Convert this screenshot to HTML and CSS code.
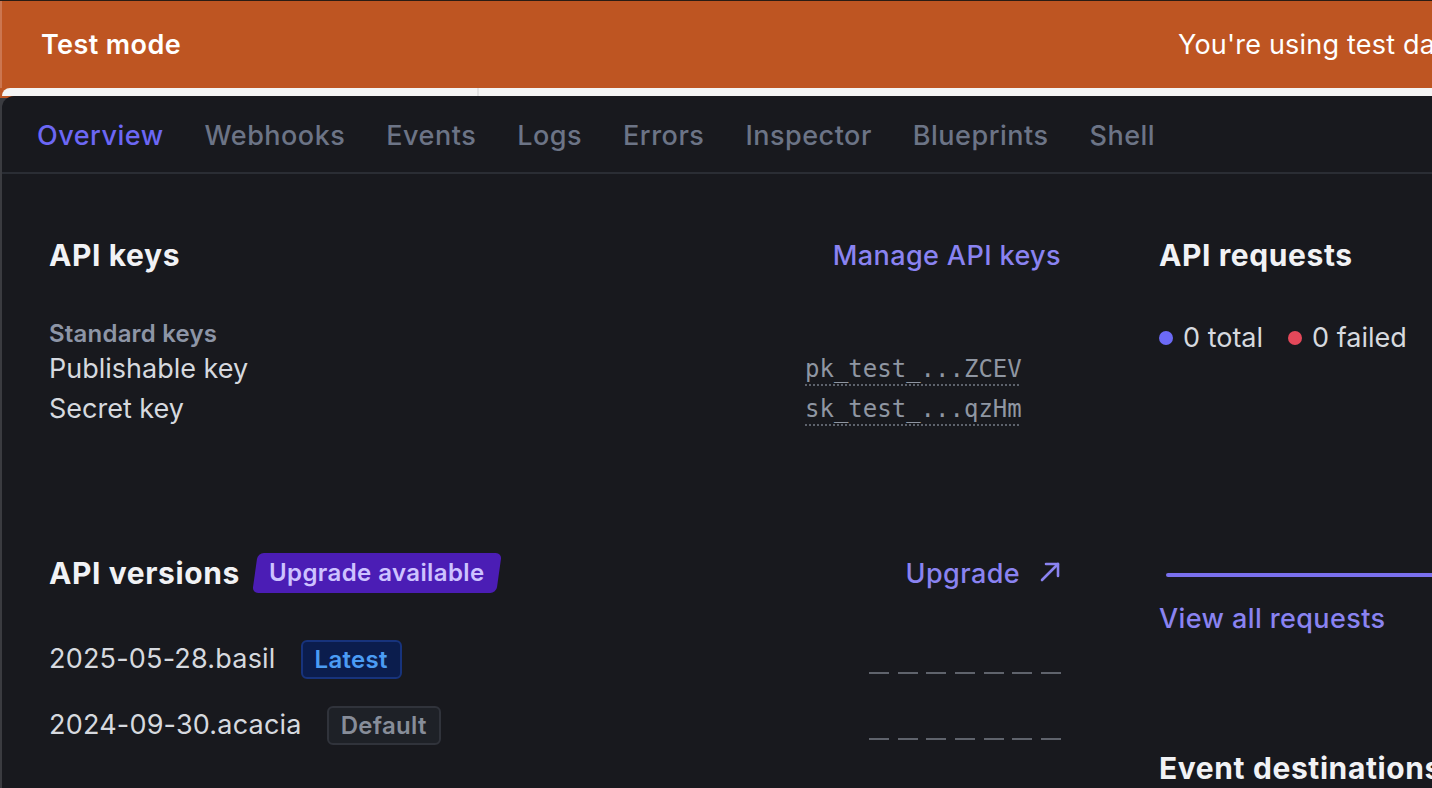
FILE: index.html
```html
<!DOCTYPE html>
<html lang="en">
<head>
<meta charset="utf-8">
<title>Workbench – Overview</title>
<link rel="stylesheet" href="styles.css">
</head>
<body>
  <header class="banner">
    <div class="banner-title">Test mode</div>
    <div class="banner-msg">You're using test data. To accept payments, complete your business profile.</div>
  </header>
  <div class="frame">
    <div class="underlay">
      <div class="underlay-side"></div>
      <div class="underlay-main"></div>
    </div>
    <main class="panel">
      <nav class="tabs">
        <a class="tab active">Overview</a>
        <a class="tab">Webhooks</a>
        <a class="tab">Events</a>
        <a class="tab">Logs</a>
        <a class="tab">Errors</a>
        <a class="tab">Inspector</a>
        <a class="tab">Blueprints</a>
        <a class="tab">Shell</a>
      </nav>
      <div class="content">
        <div class="col-left">
          <section class="keys">
            <div class="section-head">
              <h2 class="h2">API keys</h2>
              <a class="link">Manage API keys</a>
            </div>
            <div class="keys-group">
              <div class="group-label">Standard keys</div>
              <div class="key-row">
                <span class="key-label">Publishable key</span>
                <span class="key-value">pk_test_...ZCEV</span>
              </div>
              <div class="key-row">
                <span class="key-label">Secret key</span>
                <span class="key-value">sk_test_...qzHm</span>
              </div>
            </div>
          </section>
          <section class="versions">
            <div class="section-head tall">
              <div class="head-left">
                <h2 class="h2">API versions</h2>
                <span class="badge-upgrade"><span class="badge-upgrade-text">Upgrade available</span></span>
              </div>
              <a class="link link-icon">Upgrade
                <svg class="arrow" width="22" height="22" viewBox="0 0 22 22" fill="none" stroke="currentColor" stroke-width="2.6" stroke-linecap="round" stroke-linejoin="round"><path d="M3 19 L19 3"/><path d="M7 3 H19 V15"/></svg>
              </a>
            </div>
            <div class="version-row first">
              <div class="version-name">
                <span>2025-05-28.basil</span>
                <span class="pill pill-latest">Latest</span>
              </div>
              <div class="dashes"><i></i><i></i><i></i><i></i><i></i><i></i><i></i></div>
            </div>
            <div class="version-row">
              <div class="version-name">
                <span>2024-09-30.acacia</span>
                <span class="pill pill-default">Default</span>
              </div>
              <div class="dashes"><i></i><i></i><i></i><i></i><i></i><i></i><i></i></div>
            </div>
          </section>
        </div>
        <div class="col-right">
          <h2 class="h2">API requests</h2>
          <div class="legend">
            <span class="legend-item"><span class="dot dot-blue"></span>0 total</span>
            <span class="legend-item"><span class="dot dot-red"></span>0 failed</span>
          </div>
          <div class="chart-line"></div>
          <a class="link link-plain">View all requests</a>
          <h2 class="h2 h2-events">Event destinations</h2>
        </div>
      </div>
    </main>
  </div>
</body>
</html>
```

FILE: styles.css
```css
* { box-sizing: border-box; }

html, body {
  margin: 0;
  padding: 0;
  width: 1432px;
  height: 788px;
  overflow: hidden;
}

body {
  background: #18191e;
  font-family: Inter, "Noto Sans", sans-serif;
  color: #d6d9df;
}

.banner {
  height: 88px;
  border-top: 1px solid #2a1c14;
  background: #be5522;
  box-shadow: inset 2px 0 0 #cc7650;
  display: flex;
  align-items: center;
  padding-left: 41px;
  color: #fff;
  font-size: 27px;
  white-space: nowrap;
  overflow: hidden;
}

.banner-title {
  flex: none;
  width: 1137px;
  font-weight: 600;
  letter-spacing: 0.4px;
}

.banner-msg {
  flex: none;
  font-weight: 400;
  letter-spacing: 0.2px;
}

.frame {
  background: linear-gradient(to bottom, #be5522 0, #be5522 10px, #3a3b40 10px);
  padding-left: 2px;
  height: 700px;
}

.underlay {
  height: 8px;
  display: flex;
  background: #f4f4f4;
  border-top-left-radius: 16px;
}

.underlay-side {
  width: 477px;
  border-right: 2px solid #e3e3e3;
}

.underlay-main {
  flex: 1;
}

.panel {
  background: #18191e;
  border-top-left-radius: 12px;
  height: 692px;
}

.tabs {
  height: 78px;
  display: flex;
  align-items: center;
  gap: 41px;
  padding: 2px 0 0 35px;
  border-bottom: 2px solid #2a2d34;
}

.tab {
  font-size: 27px;
  font-weight: 500;
  letter-spacing: 0.5px;
  color: #6c7486;
}

.tab.active {
  color: #6c67f5;
}

.content {
  display: grid;
  grid-template-columns: 1012px 1fr;
  column-gap: 98px;
  padding: 63px 0 0 47px;
}

.h2 {
  margin: 0;
  font-size: 30px;
  line-height: 36px;
  font-weight: 700;
  letter-spacing: 0.6px;
  color: #f1f2f5;
  white-space: nowrap;
}

.section-head {
  display: flex;
  justify-content: space-between;
  align-items: center;
  height: 36px;
}

.section-head.tall {
  height: 40px;
}

.link {
  font-size: 27px;
  font-weight: 500;
  letter-spacing: 0.4px;
  color: #8a83f1;
  white-space: nowrap;
}

.link-icon {
  display: flex;
  align-items: center;
  gap: 19px;
}

.arrow {
  display: block;
  margin-top: -2px;
}

.keys-group {
  margin-top: 46px;
}

.group-label {
  font-size: 24px;
  line-height: 30px;
  font-weight: 600;
  letter-spacing: 0.2px;
  color: #8d95a6;
}

.key-row {
  display: grid;
  grid-template-columns: 1fr 256px;
  height: 40px;
  align-items: center;
}

.key-label {
  font-size: 27px;
  line-height: 40px;
  color: #d6d9df;
}

.key-value {
  justify-self: start;
  font-family: "DejaVu Sans Mono", "Liberation Mono", monospace;
  font-size: 24px;
  line-height: 28px;
  color: #8f96a2;
  text-decoration: underline dotted #5d626c;
  text-decoration-thickness: 2px;
  text-underline-offset: 7px;
}

.versions {
  margin-top: 124px;
}

.head-left {
  display: flex;
  align-items: center;
  gap: 15px;
}

.badge-upgrade {
  display: inline-block;
  background: #4b1db5;
  border-radius: 6px;
  transform: skewX(-8deg);
  padding: 0 14px;
  height: 40px;
  line-height: 40px;
}

.badge-upgrade-text {
  display: inline-block;
  transform: skewX(8deg);
  font-size: 24px;
  font-weight: 600;
  letter-spacing: 0.4px;
  color: #cdc2ff;
}

.version-row {
  display: flex;
  justify-content: space-between;
  height: 40px;
  margin-top: 26px;
}

.version-row.first {
  margin-top: 46px;
}

.version-name {
  display: flex;
  align-items: center;
  gap: 25px;
  font-size: 27px;
  line-height: 40px;
  letter-spacing: 0.2px;
  color: #d6d9df;
}

.pill {
  display: inline-block;
  height: 39px;
  line-height: 35px;
  padding: 0 12px;
  border-radius: 6px;
  border: 2px solid;
  font-size: 24px;
  font-weight: 600;
  letter-spacing: 0.3px;
}

.pill-latest {
  background: #0b1d4d;
  border-color: #17337c;
  color: #4b9cf4;
}

.pill-default {
  background: #1e2127;
  border-color: #30333b;
  color: #878d99;
}

.dashes {
  align-self: flex-end;
  margin-bottom: 5px;
  width: 192px;
  display: flex;
  justify-content: space-between;
}

.dashes i {
  display: block;
  width: 20px;
  height: 2px;
  background: #5f636c;
}

.col-right {
  display: flex;
  flex-direction: column;
  align-items: flex-start;
  overflow: hidden;
  margin-right: -30px;
}

.legend {
  margin-top: 47px;
  display: flex;
  gap: 25px;
  font-size: 27px;
  line-height: 36px;
  color: #d6d9df;
}

.legend-item {
  display: flex;
  align-items: center;
  gap: 10px;
}

.dot {
  display: inline-block;
  width: 14px;
  height: 14px;
  border-radius: 50%;
}

.dot-blue { background: #6c6af6; }
.dot-red { background: #e4485a; }

.chart-line {
  margin-top: 217px;
  margin-left: 7px;
  align-self: stretch;
  height: 4px;
  border-radius: 2px;
  background: #7a70ee;
}

.link-plain {
  display: block;
  margin-top: 24px;
  line-height: 36px;
}

.h2-events {
  margin-top: 113px;
}
```
